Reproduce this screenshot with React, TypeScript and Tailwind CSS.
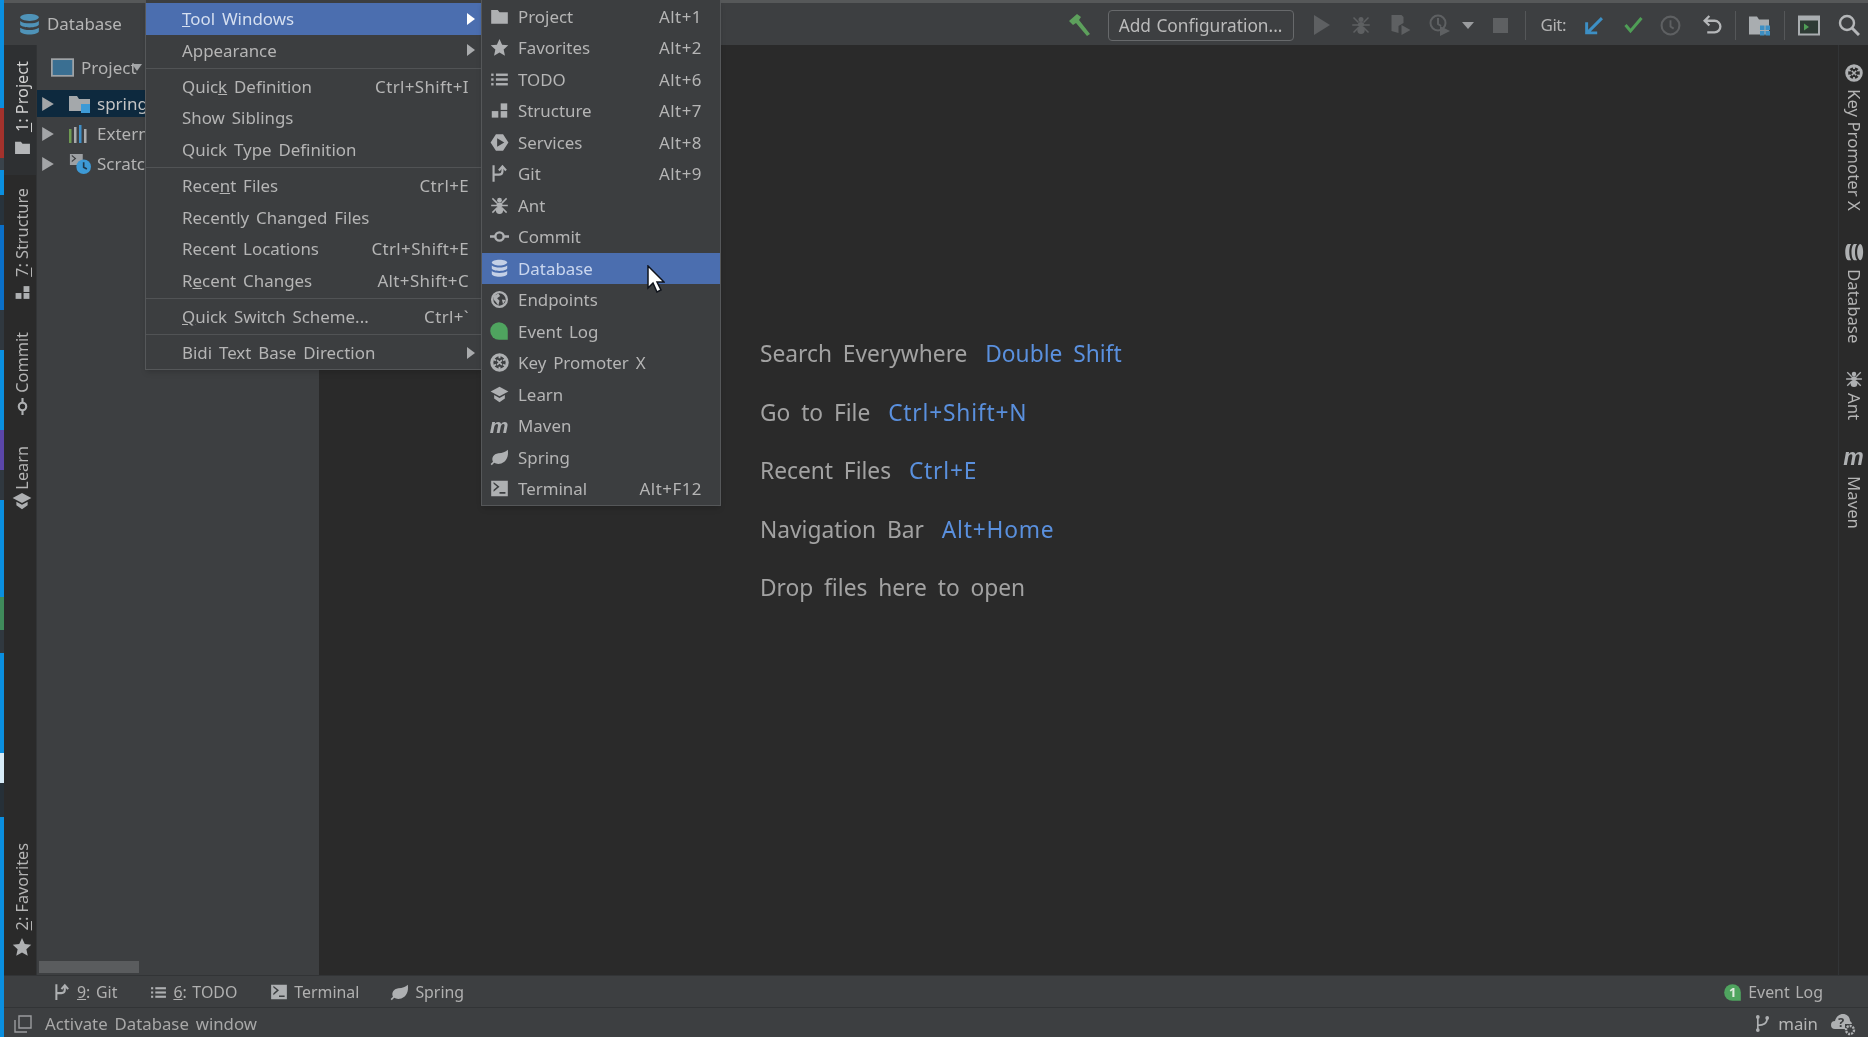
import type { ReactNode } from "react";

const FONT = "font-['Noto_Sans','Open_Sans',sans-serif]";

type IconName =
  | "folder" | "star" | "list" | "structure" | "services" | "git" | "ant" | "commit"
  | "database" | "globe" | "event" | "key" | "learn" | "leaf" | "terminal";

/** 16-unit tool window glyphs, all painted with currentColor. */
function Glyph({ name, className = "h-[19px] w-[19px]" }: { name: IconName; className?: string }) {
  const shapes: Record<IconName, ReactNode> = {
    folder: <path d="M1 2.500h5.500l1.500 2h7V14H1z" fill="currentColor" />,
    star: <path d="M8 .8l2.200 4.800 5.200.6-3.900 3.500 1.100 5.200L8 12.300l-4.600 2.600 1.100-5.200L.6 6.200l5.200-.6z" fill="currentColor" />,
    list: (
      <g fill="currentColor">
        <rect x="1" y="3" width="2" height="2" /><rect x="1" y="7" width="2" height="2" /><rect x="1" y="11" width="2" height="2" />
        <rect x="5" y="3" width="10" height="2" /><rect x="5" y="7" width="10" height="2" /><rect x="5" y="11" width="10" height="2" />
      </g>
    ),
    structure: (
      <g fill="currentColor">
        <rect x="9" y="2" width="5.500" height="5.500" /><rect x="1.500" y="8.500" width="5.500" height="5.500" /><rect x="9" y="8.500" width="5.500" height="5.500" />
      </g>
    ),
    services: <path fillRule="evenodd" d="M5 1h6l4.500 7-4.500 7H5L.5 8zM6 4.500v7L12 8z" fill="currentColor" />,
    git: (
      <g fill="none" stroke="currentColor" strokeWidth="1.800">
        <path d="M3 1v14M3 9h4.500c2 0 3-1 3-3V3" /><path d="M7.500 5.500l3-3.500 3 3.500" />
      </g>
    ),
    ant: (
      <g>
        <ellipse cx="8" cy="3.500" rx="2" ry="2" fill="currentColor" />
        <ellipse cx="8" cy="7.500" rx="2.500" ry="2" fill="currentColor" />
        <ellipse cx="8" cy="12" rx="3" ry="3.200" fill="currentColor" />
        <path d="M2 2l4 4M14 2l-4 4M1 8h14M2 14l4-4M14 14l-4-4" stroke="currentColor" strokeWidth="1.200" />
      </g>
    ),
    commit: (
      <g fill="none" stroke="currentColor" strokeWidth="2">
        <circle cx="8" cy="8" r="3.500" /><path d="M0 8h4.500M11.500 8H16" />
      </g>
    ),
    database: (
      <g fill="currentColor">
        <path d="M1.500 3c0-1.300 3-2.300 6.500-2.300s6.500 1 6.500 2.300S11.500 5.500 8 5.500 1.500 4.300 1.500 3z" />
        <path d="M1.500 5.500C3 6.800 5.500 7.200 8 7.200s5-.4 6.500-1.700v2.300C14.500 9 11.500 10 8 10S1.500 9 1.500 7.800z" />
        <path d="M1.500 10.200c1.500 1.200 4 1.600 6.500 1.600s5-.4 6.500-1.600v2.500c0 1.300-3 2.300-6.500 2.300s-6.500-1-6.500-2.300z" />
      </g>
    ),
    globe: (
      <g>
        <circle cx="8" cy="8" r="6.200" fill="none" stroke="currentColor" strokeWidth="2" />
        <path d="M3 5l4-2 1.500 2L6 7l2 2-1 4-2-3-2-2zM10 8l3 .5-2 3.500z" fill="currentColor" />
      </g>
    ),
    event: <path d="M8 1a7 7 0 0 0 0 14h7V8a7 7 0 0 0-7-7z" fill="currentColor" />,
    key: (
      <g fill="none" stroke="currentColor">
        <circle cx="8" cy="8" r="6.500" strokeWidth="2.600" />
        <path d="M8 1.500v3M8 11.500v3M2.400 4.800l2.600 1.500M11 9.700l2.600 1.500M2.400 11.200L5 9.700M11 6.300l2.600-1.500" strokeWidth="1.600" />
        <path d="M6 6l4 4M10 6l-4 4" strokeWidth="1.400" />
      </g>
    ),
    learn: (
      <g fill="currentColor">
        <path d="M8 1.500l7.500 4L8 9.500.5 5.500z" />
        <path d="M3.500 8.500L8 11l4.500-2.500v2.800L8 14.500l-4.500-3.200z" />
      </g>
    ),
    leaf: <path d="M15 1.500c.8 5.500-1 10-5.500 11.500-2.500.8-4.500.3-6-.5L1.500 14.500.5 13.500l2-2C1 8.500 3 5 7 4.500c3.500-.4 6-1 8-3z" fill="currentColor" />,
    terminal: <path fillRule="evenodd" d="M1 1.500h14v13H1zM3 4l3 2.500L3 9v1.800L8 6.500 3 2.500zM8 11v1.500h5V11z" fill="currentColor" />,
  };
  return (
    <svg viewBox="0 0 16 16" className={className}>
      {shapes[name]}
    </svg>
  );
}

function Maven({ className = "text-[21px]" }: { className?: string }) {
  return <span className={`font-['Liberation_Sans',sans-serif] font-bold italic leading-none ${className}`}>m</span>;
}

function ArrowRight({ active }: { active?: boolean }) {
  return (
    <svg viewBox="0 0 8 12" className={`h-[12px] w-[8px] ${active ? "text-white" : "text-[#a9abad]"}`}>
      <path d="M0 0l8 6-8 6z" fill="currentColor" />
    </svg>
  );
}

type Row = { label: ReactNode; keys?: string; sub?: boolean; active?: boolean };

const mainGroups: Row[][] = [
  [
    { label: <><u>T</u>ool Windows</>, sub: true, active: true },
    { label: "Appearance", sub: true },
  ],
  [
    { label: <>Quic<u>k</u> Definition</>, keys: "Ctrl+Shift+I" },
    { label: "Show Siblings" },
    { label: "Quick Type Definition" },
  ],
  [
    { label: <>Rece<u>n</u>t Files</>, keys: "Ctrl+E" },
    { label: "Recently Changed Files" },
    { label: "Recent Locations", keys: "Ctrl+Shift+E" },
    { label: <>R<u>e</u>cent Changes</>, keys: "Alt+Shift+C" },
  ],
  [{ label: <><u>Q</u>uick Switch Scheme...</>, keys: "Ctrl+`" }],
  [{ label: "Bidi Text Base Direction", sub: true }],
];

const toolRows: { icon: IconName | "maven"; label: string; keys?: string; active?: boolean; tint?: string; size?: string }[] = [
  { icon: "folder", label: "Project", keys: "Alt+1" },
  { icon: "star", label: "Favorites", keys: "Alt+2" },
  { icon: "list", label: "TODO", keys: "Alt+6" },
  { icon: "structure", label: "Structure", keys: "Alt+7" },
  { icon: "services", label: "Services", keys: "Alt+8" },
  { icon: "git", label: "Git", keys: "Alt+9" },
  { icon: "ant", label: "Ant" },
  { icon: "commit", label: "Commit" },
  { icon: "database", label: "Database", active: true, tint: "text-[#c4d0e6]" },
  { icon: "globe", label: "Endpoints" },
  { icon: "event", label: "Event Log", tint: "text-[#4fa45f]", size: "h-[22px] w-[22px]" },
  { icon: "key", label: "Key Promoter X" },
  { icon: "learn", label: "Learn" },
  { icon: "maven", label: "Maven" },
  { icon: "leaf", label: "Spring" },
  { icon: "terminal", label: "Terminal", keys: "Alt+F12" },
];

function MainMenu() {
  return (
    <div className="absolute left-[145px] top-0 w-[337px] border-x border-b border-[#555759] bg-[#3c3e40] pt-[3px] shadow-md">
      {mainGroups.map((group, i) => (
        <div key={i} className={i > 0 ? "mt-[1.500px] border-t border-[#515355] pt-[2.300px]" : ""}>
          {group.map((row, j) => (
            <div
              key={j}
              className={`flex h-[31.500px] items-center justify-between pl-[36px] pr-[6px] ${row.active ? "bg-[#4b6eaf] text-[#d5dff0]" : ""}`}
            >
              <span>{row.label}</span>
              {row.keys && <span className="pr-[6px] tracking-[0.400px]">{row.keys}</span>}
              {row.sub && <ArrowRight active={row.active} />}
            </div>
          ))}
        </div>
      ))}
    </div>
  );
}

function ToolMenu() {
  return (
    <div className="absolute left-[481px] top-0 w-[240px] border border-t-0 border-[#555759] bg-[#3c3e40] pt-[0.500px] shadow-md">
      {toolRows.map((row) => (
        <div
          key={row.label}
          className={`flex h-[31.500px] items-center pl-[7px] pr-[18px] ${row.active ? "bg-[#4b6eaf] text-[#c9d6ee]" : ""}`}
        >
          <span className={`mr-[9px] flex w-[20px] justify-center ${row.tint ?? "text-[#aeb0b2]"}`}>
            {row.icon === "maven" ? <Maven /> : <Glyph name={row.icon} className={row.size} />}
          </span>
          <span className="flex-1">{row.label}</span>
          {row.keys && <span className="tracking-[0.500px]">{row.keys}</span>}
        </div>
      ))}
    </div>
  );
}

function SideTab({ icon, label, active, gap }: { icon: ReactNode; label: ReactNode; active?: boolean; gap: string }) {
  // left strip reads bottom-to-top, so the icon sits under the label
  return (
    <div className={`flex w-full flex-col items-center gap-[7px] pl-[4px] ${gap} ${active ? "bg-[#2e3032] text-[#d0d0d0]" : ""}`}>
      <span className="rotate-180 whitespace-nowrap leading-none [writing-mode:vertical-rl]">{label}</span>
      {icon}
    </div>
  );
}

function LeftStrip() {
  return (
    <div className="flex h-full w-[33px] shrink-0 flex-col border-r border-[#323436] text-[16.300px] text-[#b4b4b4] [word-spacing:0px]">
      <SideTab active gap="pt-[16px] pb-[19px]" label={<><u>1</u>: Project</>} icon={<Glyph name="folder" className="h-[17px] w-[17px] text-[#b4b6b8]" />} />
      <SideTab gap="pt-[13px] pb-[17px]" label={<><u>7</u>: Structure</>} icon={<Glyph name="structure" className="h-[17px] w-[17px] text-[#aeb0b2]" />} />
      <SideTab gap="pt-[14px] pb-[16px]" label="Commit" icon={<Glyph name="commit" className="-mt-[2px] h-[17px] w-[17px] rotate-90 text-[#aeb0b2]" />} />
      <SideTab gap="pt-[15px]" label="Learn" icon={<Glyph name="learn" className="-mt-[5px] h-[20px] w-[20px] text-[#aeb0b2]" />} />
      <div className="flex-1" />
      <SideTab gap="pb-[18px]" label={<><u>2</u>: Favorites</>} icon={<Glyph name="star" className="h-[20px] w-[20px] text-[#aeb0b2]" />} />
    </div>
  );
}

function RightTab({ icon, label, className = "", gap = "gap-[7px]" }: { icon: ReactNode; label: string; className?: string; gap?: string }) {
  return (
    <div className={`flex flex-col items-center ${gap} ${className}`}>
      {icon}
      <span className="whitespace-nowrap leading-none [writing-mode:vertical-rl]">{label}</span>
    </div>
  );
}

function RightStrip() {
  return (
    <div className="flex h-full w-[30px] shrink-0 flex-col items-center gap-[29px] border-l border-[#323436] pt-[19px] text-[16.800px] text-[#b4b4b4] [word-spacing:0px]">
      <RightTab className="mb-[2px]" icon={<Glyph name="key" className="h-[18px] w-[18px] text-[#aeb0b2]" />} label="Key Promoter X" />
      <RightTab className="-mb-[2px]" icon={<Glyph name="database" className="h-[20px] w-[20px] rotate-90 text-[#aeb0b2]" />} label="Database" />
      <RightTab className="-mb-[3px]" gap="gap-[5px]" icon={<Glyph name="ant" className="h-[18px] w-[18px] text-[#aeb0b2]" />} label="Ant" />
      <RightTab icon={<Maven className="text-[23px] text-[#aeb0b2]" />} label="Maven" />
    </div>
  );
}

function TreeRow({ icon, label, selected }: { icon: ReactNode; label: string; selected?: boolean }) {
  return (
    <div className={`flex h-[27px] items-center whitespace-nowrap pl-[5px] ${selected ? "bg-[#0d293e] text-[#c4c4c4]" : ""}`}>
      <svg viewBox="0 0 10 12" className="h-[14px] w-[12px] text-[#a3a5a7]">
        <path d="M0 0l10 6-10 6z" fill="currentColor" />
      </svg>
      <span className="ml-[15px] mr-[6px] flex w-[22px] justify-center">{icon}</span>
      {label}
    </div>
  );
}

function ProjectPanel() {
  return (
    <div className="relative flex h-full w-[282px] shrink-0 flex-col overflow-hidden bg-[#3d3f41] text-[17px] text-[#b3b3b3]">
      <div className="flex h-[45px] items-center pl-[14px]">
        <svg viewBox="0 0 20 20" className="mr-[7px] h-[23px] w-[23px]">
          <rect x="0.750" y="2.750" width="18.500" height="14.500" fill="#3a6f92" stroke="#9fa3a6" strokeWidth="1.500" />
        </svg>
        Project
        <svg viewBox="0 0 10 7" className="-ml-[5px] h-[7px] w-[10px] text-[#a3a5a7]">
          <path d="M0 0h10L5 7z" fill="currentColor" />
        </svg>
      </div>
      <div className="flex flex-col gap-[3px]">
        <TreeRow
          selected
          label="spring"
          icon={
            <svg viewBox="0 0 22 20" className="h-[20px] w-[22px]">
              <path d="M0 2h8l2 3h11v12H0z" fill="#a4a8ab" />
              <rect x="12" y="10" width="9" height="9" fill="#3d9ad6" />
            </svg>
          }
        />
        <TreeRow
          label="Extern"
          icon={
            <svg viewBox="0 0 22 18" className="h-[18px] w-[22px]">
              <rect x="0" y="4" width="2.500" height="14" fill="#6f9b52" />
              <rect x="5" y="2" width="2.500" height="16" fill="#a9abad" />
              <rect x="10" y="0" width="2.500" height="18" fill="#3f8fc8" />
              <rect x="15" y="4" width="2.500" height="14" fill="#a9abad" />
            </svg>
          }
        />
        <TreeRow
          label="Scratc"
          icon={
            <svg viewBox="0 0 24 24" className="h-[24px] w-[24px]">
              <path fillRule="evenodd" d="M1 1h14v12H1zM3 3.500L6 6l-3 2.500v1.500L8 6 3 2z" fill="#9da0a3" />
              <circle cx="16" cy="15" r="8" fill="#3d9ad6" />
              <path d="M16 10v5.500l3.500 2" fill="none" stroke="#20384a" strokeWidth="1.800" />
            </svg>
          }
        />
      </div>
      <div className="mb-[2px] ml-[2px] mt-auto h-[12px] w-[100px] bg-[#5a5c5e]" />
    </div>
  );
}

function ToolbarIcons() {
  const dim = "text-[#5e6062]";
  return (
    <div className="ml-auto mt-[2px] flex items-center">
      <svg viewBox="0 0 24 24" className="h-[24px] w-[24px] text-[#5da05c]">
        <path d="M2 8l8-7 4 3-2 3 11 14-3 2L9 10l-3 2z" fill="currentColor" />
      </svg>
      <div className="ml-[17px] flex h-[31px] w-[186px] items-center justify-center rounded-[4px] border border-[#67696b] pt-[1px] text-[17.300px] text-[#bbbbbb] [word-spacing:1px]">
        Add Configuration...
      </div>
      <svg viewBox="0 0 16 20" className={`ml-[20px] h-[20px] w-[16px] ${dim}`}><path d="M0 0l16 10L0 20z" fill="currentColor" /></svg>
      <Glyph name="ant" className={`ml-[21px] h-[20px] w-[20px] ${dim}`} />
      <svg viewBox="0 0 20 22" className={`ml-[19px] h-[22px] w-[21px] ${dim}`}>
        <path d="M1 1h10l2 2v6l-5 3v7L1 17z" fill="currentColor" /><path d="M11 11l9 5-9 5z" fill="currentColor" />
      </svg>
      <svg viewBox="0 0 22 22" className={`ml-[18px] h-[22px] w-[22px] ${dim}`}>
        <circle cx="9" cy="9" r="7.500" fill="none" stroke="currentColor" strokeWidth="2" />
        <path d="M9 4v6l3 2" fill="none" stroke="currentColor" strokeWidth="2" /><path d="M11 12l10 5-10 5z" fill="currentColor" />
      </svg>
      <svg viewBox="0 0 12 7" className="ml-[11px] h-[7px] w-[12px] text-[#9a9c9e]"><path d="M0 0h12L6 7z" fill="currentColor" /></svg>
      <div className="ml-[19px] h-[15px] w-[15px] bg-[#5e6062]" />
      <div className="ml-[17px] h-[29px] w-px bg-[#555759]" />
      <span className="ml-[15px] text-[17px] tracking-[-0.500px] text-[#b3b3b3]">Git:</span>
      <svg viewBox="0 0 18 18" className="ml-[18px] h-[19px] w-[19px] text-[#3d8fc4]">
        <path d="M17 2L4 15M2.500 6v10h10" fill="none" stroke="currentColor" strokeWidth="2.800" />
      </svg>
      <svg viewBox="0 0 20 18" className="ml-[20px] h-[18px] w-[21px] text-[#4f9e56]">
        <path d="M2 9l5 6L18 2" fill="none" stroke="currentColor" strokeWidth="3" />
      </svg>
      <svg viewBox="0 0 20 20" className="ml-[16px] h-[21px] w-[21px] text-[#5e6062]">
        <circle cx="10" cy="10" r="8.500" fill="none" stroke="currentColor" strokeWidth="2" /><path d="M10 5v6l3 2" fill="none" stroke="currentColor" strokeWidth="1.800" />
      </svg>
      <svg viewBox="0 0 20 20" className="ml-[21px] h-[21px] w-[21px] text-[#b5b7b9]">
        <path d="M7 1L2.500 5.500 7 10M3 5.500h9a5.500 5.500 0 0 1 0 11H5" fill="none" stroke="currentColor" strokeWidth="2.200" />
      </svg>
      <div className="ml-[12px] h-[29px] w-px bg-[#555759]" />
      <svg viewBox="0 0 22 20" className="ml-[13px] h-[21px] w-[22px]">
        <path d="M0 1h8l2 3h10v15H0z" fill="#a9adb0" />
        <g fill="#3d8fc4"><rect x="11" y="10" width="4.500" height="4.500" /><rect x="16.500" y="10" width="4.500" height="4.500" /><rect x="11" y="15.500" width="4.500" height="4.500" /><rect x="16.500" y="15.500" width="4.500" height="4.500" /></g>
      </svg>
      <div className="ml-[13px] h-[29px] w-px bg-[#555759]" />
      <svg viewBox="0 0 22 20" className="ml-[13px] h-[21px] w-[22px]">
        <rect x="1" y="1" width="20" height="18" fill="#2e3b35" stroke="#a9adb0" strokeWidth="2" /><rect x="1" y="1" width="20" height="4" fill="#a9adb0" /><path d="M6 8l5 3.500L6 15z" fill="#4f9e56" />
      </svg>
      <svg viewBox="0 0 22 22" className="ml-[18px] mr-[8px] h-[22px] w-[22px] text-[#b5b7b9]">
        <circle cx="9" cy="9" r="7" fill="none" stroke="currentColor" strokeWidth="2.400" /><path d="M14 14l7 7" stroke="currentColor" strokeWidth="3" />
      </svg>
    </div>
  );
}

function BottomTab({ icon, label, className }: { icon: ReactNode; label: ReactNode; className: string }) {
  return (
    <div className={`flex items-center gap-[6px] ${className}`}>
      {icon}
      <span>{label}</span>
    </div>
  );
}

// desktop peeking out past the maximised window, top to bottom
const desktopBits = [
  "h-[108px] bg-[#0a8fe0]", "h-[50px] bg-[#a3322c]", "h-[12px] bg-[#39434b]", "h-[25px] bg-[#0a8fe0]", "h-[30px] bg-[#28333c]",
  "h-[85px] bg-[#0a6fc8]", "h-[40px] bg-[#30383f]", "h-[80px] bg-[#0a8fe0]", "h-[40px] bg-[#5b46a8]", "h-[30px] bg-[#30383f]",
  "h-[97px] bg-[#0a8fe0]", "h-[33px] bg-[#3f8a5a]", "h-[23px] bg-[#30383f]", "h-[100px] bg-[#0a8fe0]", "h-[30px] bg-[#d8ecf8]",
  "h-[34px] bg-[#263038]", "flex-1 bg-[#0a8fe0]",
];

const hint = "leading-[36px]";
const shortcut = "ml-[7px] text-[#5a90de]";

export default function App() {
  return (
    <div className={`relative flex h-[1037px] w-[1868px] overflow-hidden bg-[#2a2a2a] text-[16.900px] text-[#b5b5b5] blur-[0.5px] [word-spacing:2.500px] ${FONT}`}>
      <div className="flex w-[4px] shrink-0 flex-col">
        {desktopBits.map((c, i) => (
          <div key={i} className={c} />
        ))}
      </div>
      <div className="flex min-w-0 flex-1 flex-col">
        <header className="flex h-[45px] shrink-0 items-center border-t-[3px] border-t-[#565859] bg-[#3d3f41] pl-[14px]">
          <Glyph name="database" className="h-[23px] w-[23px] text-[#4f93b8]" />
          <span className="ml-[6px] text-[#b5b5b5]">Database</span>
          <ToolbarIcons />
        </header>
        <div className="flex min-h-0 flex-1">
          <LeftStrip />
          <ProjectPanel />
          <main className="flex flex-1 flex-col justify-center gap-[22.500px] pb-[78px] pl-[441px] text-[22.750px] text-[#a2a2a2] [word-spacing:4.900px]">
            <p className={hint}>Search Everywhere <span className={shortcut}>Double Shift</span></p>
            <p className={hint}>Go to File <span className={`${shortcut} tracking-[0.800px]`}>Ctrl+Shift+N</span></p>
            <p className={hint}>Recent Files <span className={`${shortcut} tracking-[0.800px]`}>Ctrl+E</span></p>
            <p className={hint}>Navigation Bar <span className={`${shortcut} tracking-[0.800px]`}>Alt+Home</span></p>
            <p className={hint}>Drop files here to open</p>
          </main>
          <RightStrip />
        </div>
        <div className="flex h-[32px] shrink-0 items-center border-t border-[#323436] bg-[#3d3f41] pl-[49px] pr-[45px] pt-[2px] text-[15.900px] text-[#b0b0b0] [word-spacing:1.500px]">
          <BottomTab className="mr-[33px]" icon={<Glyph name="git" className="h-[18px] w-[18px] text-[#aeb0b2]" />} label={<><u>9</u>: Git</>} />
          <BottomTab className="mr-[33px]" icon={<Glyph name="list" className="h-[17px] w-[17px] text-[#aeb0b2]" />} label={<><u>6</u>: TODO</>} />
          <BottomTab className="mr-[31px]" icon={<Glyph name="terminal" className="h-[18px] w-[18px] text-[#aeb0b2]" />} label="Terminal" />
          <BottomTab className="" icon={<Glyph name="leaf" className="h-[19px] w-[19px] text-[#aeb0b2]" />} label="Spring" />
          <div className="ml-auto flex items-center gap-[6px]">
            <span className="relative flex h-[19px] w-[19px] items-center justify-center">
              <Glyph name="event" className="absolute inset-0 h-[19px] w-[19px] text-[#4fa45f]" />
              <span className="relative text-[13px] font-bold leading-none text-[#dfe9df]">1</span>
            </span>
            Event Log
          </div>
        </div>
        <footer className="flex h-[30px] shrink-0 items-center border-t border-[#323436] bg-[#3d3f41] pl-[10px] pr-[11px] pt-[2px] text-[16.800px] text-[#a8a8a8]">
          <svg viewBox="0 0 18 18" className="h-[18px] w-[18px] text-[#9a9c9e]">
            <path d="M5 1h12v12H5zM1 5v12h12" fill="none" stroke="currentColor" strokeWidth="1.400" />
          </svg>
          <span className="ml-[13px]">Activate Database window</span>
          <div className="ml-auto flex items-center">
            <svg viewBox="0 0 16 20" className="h-[19px] w-[15px] text-[#aeb0b2]">
              <path d="M3 3v14M3 12c6 0 10-2 10-8" fill="none" stroke="currentColor" strokeWidth="1.800" />
              <circle cx="3" cy="3" r="2" fill="currentColor" /><circle cx="3" cy="17" r="2" fill="currentColor" /><circle cx="13" cy="4" r="2" fill="currentColor" />
            </svg>
            <span className="ml-[8px] text-[#b5b5b5]">main</span>
            <span className="relative ml-[13px] flex h-[24px] w-[26px]">
              <svg viewBox="0 0 26 24" className="h-[24px] w-[26px] text-[#aeb0b2]">
                <path d="M4 17a4 4 0 0 1 0-8c1-4 4-7 8-7 4 0 7 3 7 7a4 4 0 0 1 2 3h-7v5z" fill="currentColor" />
                <circle cx="19" cy="18" r="4" fill="none" stroke="currentColor" strokeWidth="2.400" strokeDasharray="2 1" />
              </svg>
              <span className="absolute left-[7px] top-[2px] text-[13px] font-bold leading-[16px] text-[#3d3f41]">?</span>
            </span>
          </div>
        </footer>
      </div>
      <MainMenu />
      <ToolMenu />
      <svg viewBox="0 0 18 28" className="absolute left-[647px] top-[265px] h-[28px] w-[18px]">
        <path d="M1 1v22l5-5 4 9 4-2-4-8h7z" fill="#ffffff" stroke="#10141c" strokeWidth="1.500" />
      </svg>
    </div>
  );
}
